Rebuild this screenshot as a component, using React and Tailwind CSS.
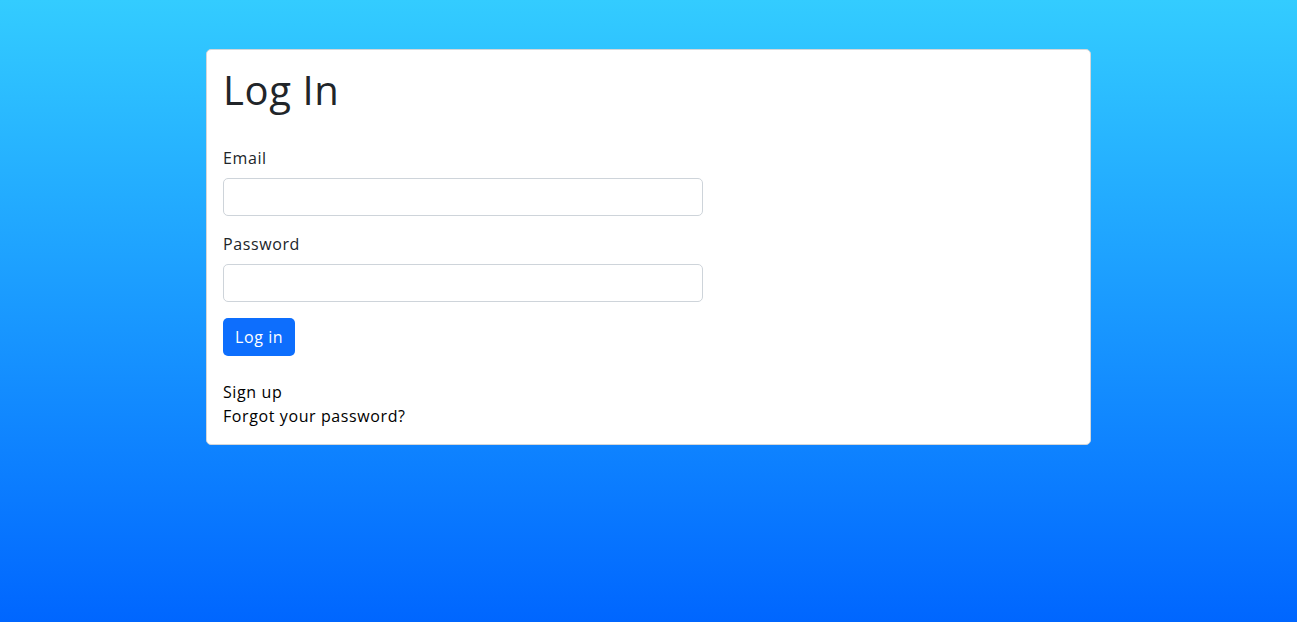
import React from 'react';

export default function App() {
  return (
    <div className="min-h-screen w-full bg-[linear-gradient(#33ccff,#0066ff)] pt-[49px] font-['Open_Sans',sans-serif] tracking-[0.6px]">
      {/* Card */}
      <div className="mx-auto w-[885px] rounded-[5px] border border-[#d3d6d9] bg-white p-4">
        <h1 className="text-[40px] leading-[48px] font-medium tracking-[0.6px] text-[#212529]">Log In</h1>

        <form className="mt-8" onSubmit={(e) => e.preventDefault()}>
          <div className="mb-4">
            <label className="block mb-2 text-base leading-6 text-[#212529]">Email</label>
            <input
              type="email"
              className="block w-[480px] h-[38px] rounded-[5px] border border-[#ced4da] bg-white px-3 text-base outline-none"
            />
          </div>
          <div className="mb-4">
            <label className="block mb-2 text-base leading-6 text-[#212529]">Password</label>
            <input
              type="password"
              className="block w-[480px] h-[38px] rounded-[5px] border border-[#ced4da] bg-white px-3 text-base outline-none"
            />
          </div>
          <button
            type="submit"
            className="h-[38px] rounded-[5px] bg-[#0d6efd] px-3 text-base leading-6 tracking-[0.6px] text-white"
          >
            Log in
          </button>
        </form>

        {/* Links */}
        <div className="mt-6 flex flex-col text-base leading-6 text-black">
          <a href="#" className="self-start">Sign up</a>
          <a href="#" className="self-start">Forgot your password?</a>
        </div>
      </div>
    </div>
  );
}
